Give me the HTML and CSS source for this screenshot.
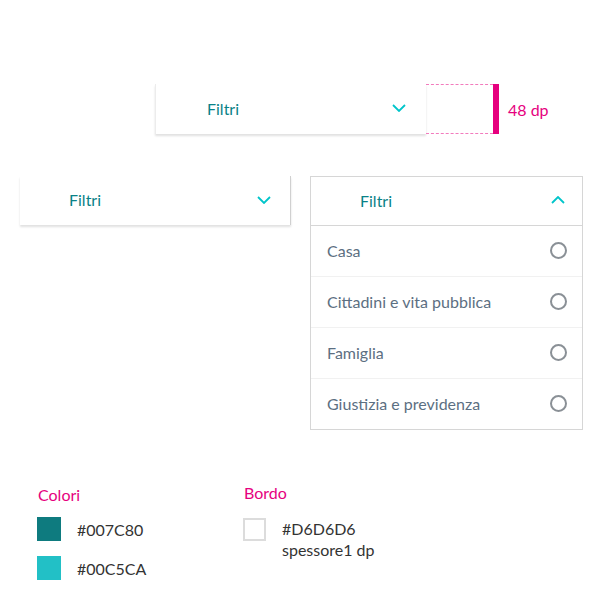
FILE: index.html
```html
<!DOCTYPE html>
<html lang="it">
<head>
<meta charset="utf-8">
<title>Filtri</title>
<link rel="stylesheet" href="styles.css">
</head>
<body>
<div class="page">
  <div class="top-row">
    <div class="dropdown dropdown--top">
      <span class="dropdown__label">Filtri</span>
      <svg class="chev" width="14" height="8" viewBox="0 0 14 8"><path d="M1 1l6 6 6-6" fill="none" stroke="#00C5CA" stroke-width="1.8"/></svg>
    </div>
    <div class="measure"></div>
    <div class="measure-bar"></div>
    <span class="measure-label">48 dp</span>
  </div>

  <div class="second-row">
    <div class="dropdown dropdown--closed">
      <span class="dropdown__label">Filtri</span>
      <svg class="chev" width="14" height="8" viewBox="0 0 14 8"><path d="M1 1l6 6 6-6" fill="none" stroke="#00C5CA" stroke-width="1.8"/></svg>
    </div>
    <div class="panel">
      <div class="panel__head">
        <span class="dropdown__label">Filtri</span>
        <svg class="chev" width="14" height="8" viewBox="0 0 14 8"><path d="M1 7l6-6 6 6" fill="none" stroke="#00C5CA" stroke-width="1.8"/></svg>
      </div>
      <div class="item"><span>Casa</span><span class="radio"></span></div>
      <div class="item"><span>Cittadini e vita pubblica</span><span class="radio"></span></div>
      <div class="item"><span>Famiglia</span><span class="radio"></span></div>
      <div class="item"><span>Giustizia e previdenza</span><span class="radio"></span></div>
    </div>
  </div>

  <div class="legend">
    <div class="legend__col legend__col--colors">
      <div class="legend__title">Colori</div>
      <div class="swatch-row"><span class="swatch swatch--dark"></span><span class="code">#007C80</span></div>
      <div class="swatch-row"><span class="swatch swatch--light"></span><span class="code">#00C5CA</span></div>
    </div>
    <div class="legend__col legend__col--border">
      <div class="legend__title">Bordo</div>
      <div class="swatch-row swatch-row--border"><span class="swatch swatch--border"></span><span class="code">#D6D6D6<br>spessore1 dp</span></div>
    </div>
  </div>
</div>
</body>
</html>
```
FILE: styles.css
```css
* { box-sizing: border-box; }
html, body { margin: 0; padding: 0; background: #fff; }
body { font-family: "Lato", "Open Sans", sans-serif; }
.page { width: 600px; height: 598px; overflow: hidden; }

.top-row {
  display: flex;
  align-items: stretch;
  padding: 84px 0 0 155px;
  height: 134px;
}
.dropdown {
  display: flex;
  align-items: center;
  justify-content: space-between;
  background: #fff;
  height: 50px;
  box-shadow: 0 2px 2px rgba(0,0,0,0.12);
}
.dropdown--top {
  width: 271px;
  padding: 0 20px 2px 51px;
  border-left: 1px solid #ececec;
}
.dropdown__label {
  color: #0a8287;
  font-size: 16px;
}
.chev { display: block; }
.measure {
  width: 67px;
  border-top: 1px dashed #f27bbd;
  border-bottom: 1px dashed #f27bbd;
}
.measure-bar {
  width: 6px;
  background: #e6007e;
}
.measure-label {
  align-self: center;
  margin-left: 9px;
  color: #e6007e;
  font-size: 16px;
}

.second-row {
  display: flex;
  align-items: flex-start;
  padding: 42px 0 0 20px;
  gap: 19px;
}
.dropdown--closed {
  width: 271px;
  height: 49px;
  padding: 0 19px 2px 49px;
  border-right: 1px solid #d0d0d0;
}
.panel {
  width: 273px;
  border: 1px solid #d6d6d6;
}
.panel__head {
  display: flex;
  align-items: center;
  justify-content: space-between;
  height: 49px;
  padding: 0 17px 2px 49px;
  border-bottom: 1px solid #d6d6d6;
}
.item {
  display: flex;
  align-items: center;
  justify-content: space-between;
  height: 51px;
  padding: 0 15px 2px 16px;
  color: #5c6f82;
  font-size: 16px;
  border-top: 1px solid #f1f1f1;
}
.panel__head + .item { border-top: 0; height: 50px; }
.radio {
  width: 17px;
  height: 17px;
  border: 2px solid #8a9096;
  border-radius: 50%;
}

.legend {
  display: flex;
  padding-left: 38px;
  margin-top: 53px;
}
.legend__col--colors { width: 206px; }
.legend__title {
  color: #e6007e;
  font-size: 16px;
  height: 24px;
  line-height: 24px;
}
.legend__col--border .legend__title { margin-top: -2px; }
.swatch-row {
  display: flex;
  align-items: center;
  margin-top: 10px;
  height: 24px;
}
.swatch-row + .swatch-row { margin-top: 15px; }
.swatch {
  width: 24px;
  height: 24px;
  margin-left: -1px;
  margin-right: 16px;
}
.swatch--dark { background: #0e7b7f; }
.swatch--light { background: #22c0c6; }
.swatch--border {
  width: 23px;
  height: 23px;
  border: 2px solid #dcdcdc;
  align-self: flex-start;
}
.swatch-row--border {
  align-items: flex-start;
  margin-top: 13px;
  height: auto;
}
.code {
  color: #333;
  font-size: 16px;
  line-height: 21px;
}
```
